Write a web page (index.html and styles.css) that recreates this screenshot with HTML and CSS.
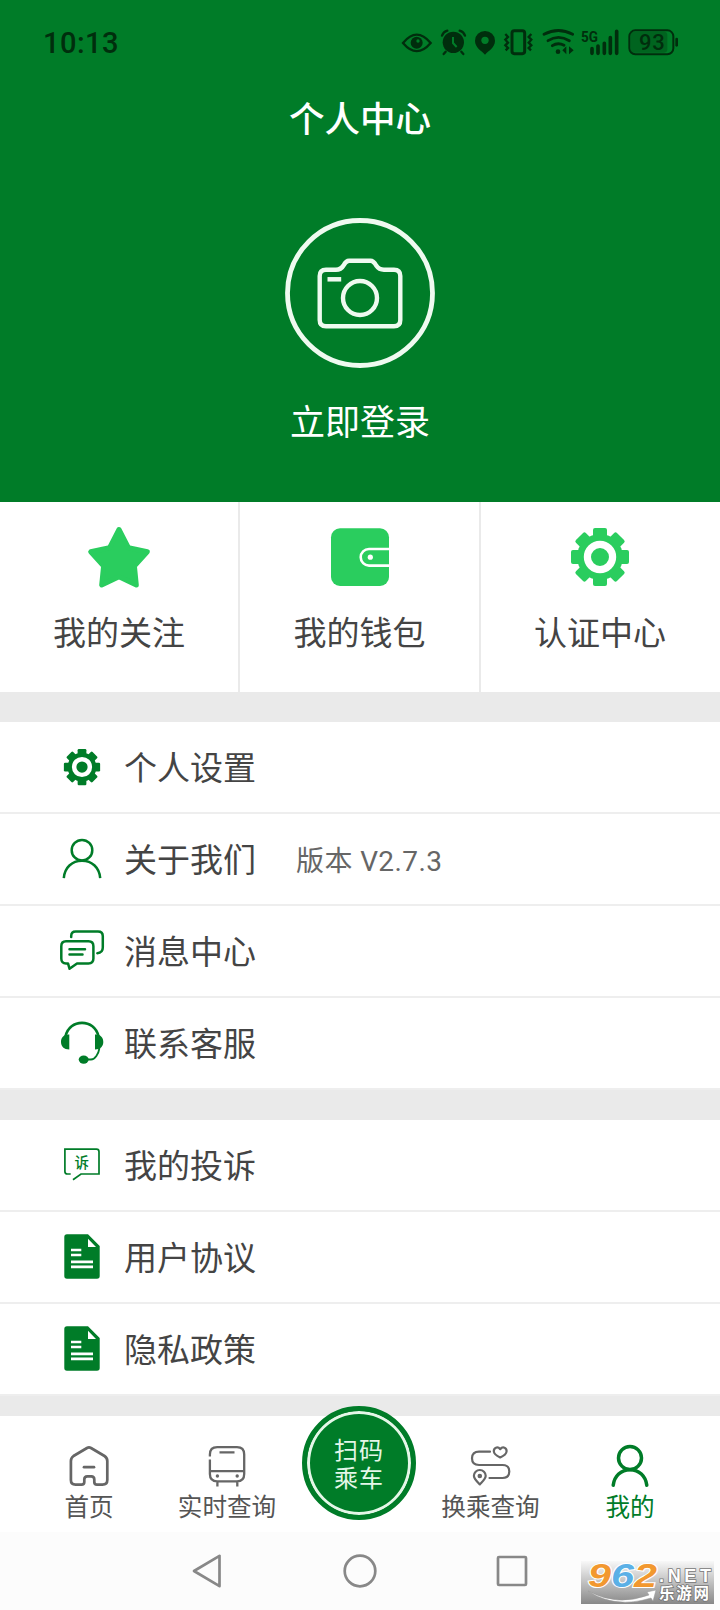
FILE: index.html
```html
<!DOCTYPE html>
<html lang="zh-CN">
<head>
    <meta charset="UTF-8">
    <meta name="viewport" content="width=device-width, initial-scale=1.0">
    <title>个人中心</title>
    <link rel="stylesheet" href="styles.css">
</head>
<body>
    <!-- shared icons -->
    <svg class="sprite" width="0" height="0">
        <symbol id="gear" viewBox="0 0 64 64">
            <g fill="currentColor">
                <circle cx="32" cy="32" r="23"/>
                <rect x="25" y="3" width="14" height="58" rx="2"/>
                <rect x="25" y="3" width="14" height="58" rx="2" transform="rotate(45 32 32)"/>
                <rect x="25" y="3" width="14" height="58" rx="2" transform="rotate(90 32 32)"/>
                <rect x="25" y="3" width="14" height="58" rx="2" transform="rotate(135 32 32)"/>
            </g>
            <circle cx="32" cy="32" r="12.6" fill="none" stroke="#fff" stroke-width="7.2"/>
        </symbol>
        <symbol id="doc" viewBox="0 -1 44 46">
            <path fill="currentColor" d="M7 -.7H28L39.700 11V41q0 2.700-2.700 2.700H7q-2.700 0-2.700-2.700V2q0-2.700 2.700-2.700z"/>
            <path fill="#fff" d="M28 3.700V12h8zM11 13.700h10.300V16.200H11zM11 18.700h10.300V21.200H11zM11 25.400h22V28.200H11zM11 30.400h22V33.200H11z"/>
        </symbol>
    </svg>

    <header class="header">
        <div class="status-bar">
            <span class="time">10:13</span>
            <div class="status-icons">
                <svg width="39" height="26" viewBox="36 41 117 78">
                    <path d="M39 83Q80 33 122 83Q80 132 39 83z" fill="none" stroke="currentColor" stroke-width="7"/>
                    <circle cx="80" cy="82" r="18" fill="currentColor"/>
                    <circle cx="84" cy="77" r="5" class="cut"/>
                </svg>
                <svg width="34" height="26" viewBox="153 41 102 78">
                    <circle cx="190" cy="81" r="32" fill="currentColor"/>
                    <path d="M156 61q4-12 16-15M225 61q-4-12-16-15M167 109l-6 7M214 109l6 7" fill="none" stroke="currentColor" stroke-width="7" stroke-linecap="round"/>
                    <path d="M189 65v18l11 12" fill="none" class="cut-line" stroke-width="6"/>
                </svg>
                <svg width="29" height="26" viewBox="255 41 87 78">
                    <path d="M285 118C275 106 255 97 255 76a30 29 0 0 1 60 0C315 97 295 106 285 118z" fill="currentColor"/>
                    <circle cx="285" cy="75" r="11" class="cut"/>
                </svg>
                <svg width="39" height="26" viewBox="342 41 117 78">
                    <rect x="366" y="46" width="38" height="69" rx="7" fill="none" stroke="currentColor" stroke-width="9"/>
                    <path d="M346 56l8 9-8 8 8 9-8 8 8 8-7 7M424 56l-8 9 8 8-8 9 8 8-8 8 7 7" fill="none" stroke="currentColor" stroke-width="7"/>
                </svg>
                <svg width="38" height="26" viewBox="459 41 114 78">
                    <path d="M462 57Q505 34 548 57M474 76Q505 56 538 76M487 91Q504 80 522 90" fill="none" stroke="currentColor" stroke-width="8.500" stroke-linecap="round"/>
                    <circle cx="504" cy="109" r="7" fill="currentColor"/>
                    <path d="M529 93v24l-12-12zM537 93l14 12-14 12z" fill="currentColor"/>
                </svg>
                <svg width="47" height="26" viewBox="573 41 141 78">
                    <text x="573" y="79" class="net" textLength="51" lengthAdjust="spacingAndGlyphs">5G</text>
                    <path d="M606 114v-14M624 114v-22M643 114v-30M661 114v-47M680 114v-66" stroke="currentColor" stroke-width="11" stroke-linecap="round"/>
                </svg>
                <svg width="51" height="26" viewBox="714 41 153 78">
                    <rect x="722" y="49" width="110" height="63" rx="10" fill="currentColor" opacity=".3"/>
                    <rect x="718" y="45" width="132" height="72" rx="18" fill="none" stroke="currentColor" stroke-width="6"/>
                    <path d="M860 71v19" stroke="currentColor" stroke-width="8" stroke-linecap="round"/>
                    <text x="747" y="104" class="level" textLength="77">93</text>
                </svg>
            </div>
        </div>
        <h1>个人中心</h1>
        <svg class="avatar" width="150" height="150" viewBox="0 0 150 150" fill="none" stroke="#effaf0">
            <circle cx="75" cy="75" r="72.500" stroke-width="4.800"/>
            <path stroke-width="4.400" d="M41 51.700H51Q56 51.700 58.500 47.500Q61 42.700 64 42.700H85.500Q88.500 42.700 91.200 47.500Q94 51.700 99 51.700H109Q115.300 51.700 115.300 58V102Q115.300 108.300 109 108.300H41Q34.700 108.300 34.700 102V58Q34.700 51.700 41 51.700z"/>
            <circle cx="75" cy="80" r="17" stroke-width="4.400"/>
            <path stroke-width="4.500" d="M42.500 61.300h13.700"/>
        </svg>
        <a class="login">立即登录</a>
    </header>

    <section class="cards">
        <div class="card">
            <svg width="64" height="64" viewBox="0 0 64 64">
                <path fill="currentColor" stroke="currentColor" stroke-width="5" stroke-linejoin="round" d="M32 4.500L41.500 22.800L60.300 26.800L47.400 41L49.300 60L32 51.800L14.700 60L16.600 41L3.700 26.800L22.500 22.800z"/>
            </svg>
            <span>我的关注</span>
        </div>
        <div class="card">
            <svg width="64" height="64" viewBox="0 0 64 64">
                <rect x="3" y="3.300" width="58" height="57.700" rx="9" fill="currentColor"/>
                <path d="M61 24H41a8.300 8.300 0 0 0 0 16.600H61" fill="none" stroke="#fff" stroke-width="2.600"/>
                <circle cx="42.300" cy="32.200" r="2.600" fill="#fff"/>
            </svg>
            <span>我的钱包</span>
        </div>
        <div class="card">
            <svg width="64" height="64"><use href="#gear"/></svg>
            <span>认证中心</span>
        </div>
    </section>

    <ul class="menu">
        <li>
            <svg class="icon gear-small" width="40" height="40"><use href="#gear"/></svg>
            <span>个人设置</span>
        </li>
        <li>
            <svg class="icon" width="44" height="44" viewBox="0 -.7 44 44" fill="none" stroke="currentColor" stroke-width="2.500">
                <circle cx="22" cy="12.500" r="10.300"/>
                <path d="M3.800 40.500C4.500 30 12 23 22 23S39.500 30 40.200 40.500"/>
            </svg>
            <span>关于我们</span>
            <em>版本 V2.7.3</em>
        </li>
        <li>
            <svg class="icon" width="44" height="44" viewBox="0 0 44 44" fill="none" stroke="currentColor" stroke-width="2.500" stroke-linecap="round" stroke-linejoin="round">
                <path d="M6 12.300H28.500Q33.400 12.300 33.400 17.200V29.500Q33.400 34.400 28.500 34.400H17L9.500 39.700L8 34.400H6Q1.300 34.400 1.300 29.500V17.200Q1.300 12.300 6 12.300z"/>
                <path d="M11.200 8V7Q11.200 2.500 15.700 2.500H38Q42.800 2.500 42.800 7.200V18.500Q42.800 23.800 37.300 24.200M9.500 20.300h15.500M9.500 25.500h13"/>
            </svg>
            <span>消息中心</span>
        </li>
        <li>
            <svg class="icon" width="44" height="44" viewBox="0 0 44 44">
                <path fill="none" stroke="currentColor" stroke-width="2.700" d="M5.500 15.500C9 -2.800 35 -2.800 38.500 15.500"/>
                <path fill="none" stroke="currentColor" stroke-width="1.800" d="M39.500 27C38.500 33 35 38.500 31 38.500H26"/>
                <path fill="currentColor" d="M9.300 13.500V28.500C4 28.500 1 25.500 1 21S4 13 9.300 13.500zM35 13.500V28.500C40.300 28.500 43.300 25.500 43.300 21S40.300 13 35 13.500z"/>
                <ellipse cx="23.700" cy="38.600" rx="5" ry="4.200" fill="currentColor"/>
            </svg>
            <span>联系客服</span>
        </li>
    </ul>

    <ul class="menu">
        <li>
            <svg class="icon" width="44" height="44" viewBox="0 0 44 44">
                <path fill="none" stroke="currentColor" stroke-width="1.700" d="M10.700 31H7.500Q4.900 31 4.900 28.400V6.200H36.500Q39 6.200 39 8.700V31H21L13 36.800"/>
                <text x="14.500" y="24.700" class="su">诉</text>
            </svg>
            <span>我的投诉</span>
        </li>
        <li>
            <svg class="icon" width="44" height="46"><use href="#doc"/></svg>
            <span>用户协议</span>
        </li>
        <li>
            <svg class="icon" width="44" height="46"><use href="#doc"/></svg>
            <span>隐私政策</span>
        </li>
    </ul>

    <nav class="tabs">
        <a class="tab">
            <svg width="44" height="44" viewBox="0 0 44 44" fill="none" stroke="currentColor" stroke-width="2.700" stroke-linecap="round" stroke-linejoin="round">
                <path d="M20 4Q22 2.900 24 4L37.500 12Q40.300 13.800 40.300 17V36Q40.300 40.600 35.500 40.600H30Q27.300 40.600 27.300 38V35.500Q27.300 32.300 24.300 32.300H20.300Q17.300 32.300 17.300 35.500V38Q17.300 40.600 14.500 40.600H8.500Q3.900 40.600 3.900 36V17Q3.900 13.800 6.500 12z"/>
                <path d="M17 23.200h10"/>
            </svg>
            <span>首页</span>
        </a>
        <a class="tab">
            <svg width="44" height="44" viewBox="0 0 44 44" fill="none" stroke="currentColor" stroke-width="2.300">
                <path d="M4.900 12.500V10.500Q4.900 3.200 12.200 3.200H32Q39.200 3.200 39.200 10.500V30Q39.200 37.300 32 37.300H12.200Q4.900 37.300 4.900 30V15.500M5 27.200H39M14.500 8.400H29.500M12.400 38v4.500M32.300 38v4.500"/>
                <circle cx="12.400" cy="32" r="1.700" fill="currentColor" stroke="none"/>
                <circle cx="32.200" cy="32" r="1.700" fill="currentColor" stroke="none"/>
            </svg>
            <span>实时查询</span>
        </a>
        <a class="scan">
            <span>扫码</span>
            <span>乘车</span>
        </a>
        <a class="tab">
            <svg width="44" height="44" viewBox="0 0 44 44" fill="none" stroke="currentColor" stroke-width="2.200" stroke-linecap="round" stroke-linejoin="round">
                <path d="M22 7.700H11Q4 7.700 4 14.300T11 21H34.500Q41.300 21 41.300 27.500T34.500 34H21.500"/>
                <path d="M32.200 5.200C29.500 1.800 25.700 4 25.800 7.300C26 10.300 29.500 12.300 32.200 13.500C35 12.300 38.400 10.300 38.600 7.300C38.700 4 35 1.800 32.200 5.200z"/>
                <path d="M11.800 40.400C9.500 38 5.900 35 5.900 31.800A5.900 5.800 0 0 1 17.700 31.800C17.700 35 14 38 11.800 40.400z"/>
                <circle cx="11.800" cy="32" r="1.200" fill="currentColor"/>
            </svg>
            <span>换乘查询</span>
        </a>
        <a class="tab active">
            <svg width="44" height="44" viewBox="0 0 44 44" fill="none" stroke="currentColor" stroke-width="3.500" stroke-linecap="round">
                <circle cx="22" cy="14" r="11.500"/>
                <path d="M5.200 41.300C6.300 32 13 25.800 22 25.800S37.700 32 38.800 41.300"/>
            </svg>
            <span>我的</span>
        </a>
    </nav>

    <footer class="sys-nav">
        <svg width="34" height="36" viewBox="0 0 34 36"><path d="M4 18L29.500 2.800V33.200z"/></svg>
        <svg width="34" height="36" viewBox="0 0 34 36"><circle cx="17" cy="18" r="15.300"/></svg>
        <svg width="34" height="36" viewBox="0 0 34 36"><rect x="3" y="4" width="28" height="28" rx="1"/></svg>
    </footer>

    <div class="watermark">
        <svg width="133" height="43" viewBox="0 0 133 43">
            <text x="7" y="25.500" class="wm-num" textLength="69" lengthAdjust="spacingAndGlyphs"><tspan fill="#f2982f">9</tspan><tspan fill="#5bb0e6">6</tspan><tspan fill="#f2982f">2</tspan></text>
            <path d="M7 30Q36 46 68 34L66 31L75 29L72 40L70 37Q34 48 7 30z" fill="#fff" stroke="#999" stroke-width=".5"/>
            <text x="78" y="20.500" class="wm-net" textLength="52" lengthAdjust="spacing">.NET</text>
            <text x="78" y="38.300" class="wm-cn" textLength="50">乐游网</text>
        </svg>
    </div>
</body>
</html>
```
FILE: styles.css
```css
* {
    box-sizing: border-box;
}

body {
    margin: 0;
    width: 720px;
    height: 1610px;
    background: #eaeaea;
    color: #444;
    font-family: Roboto, "Noto Sans CJK SC", sans-serif;
    position: relative;
    overflow: hidden;
}

svg {
    display: block;
    flex-shrink: 0;
    overflow: visible;
}

.sprite {
    position: absolute;
}

/* header */
.header {
    height: 502px;
    background: #007c28;
    color: #fff;
    display: flex;
    flex-direction: column;
    align-items: center;
}

.status-bar {
    width: 100%;
    height: 84px;
    padding: 0 41px 0 43px;
    display: flex;
    justify-content: space-between;
    align-items: center;
    color: #002e0d;
}

.time {
    padding-top: 1px;
    font-size: 29px;
    font-weight: 500;
    letter-spacing: .5px;
}

.status-icons {
    display: flex;
}

.cut {
    fill: #007c28;
}

.cut-line {
    stroke: #007c28;
}

.net {
    font-size: 46px;
    font-weight: 700;
    fill: currentColor;
}

.level {
    font-size: 66px;
    font-weight: 500;
    fill: currentColor;
}

h1 {
    margin: 10px 0 0;
    font-size: 35.5px;
    font-weight: 500;
    line-height: 52px;
}

.avatar {
    margin-top: 72px;
}

.login {
    margin-top: 30px;
    font-size: 35px;
    line-height: 52px;
}

/* three shortcuts */
.cards {
    display: grid;
    grid-template-columns: 240px 241px 239px;
    height: 190px;
    background: #fff;
}

.card {
    padding-top: 23px;
    display: flex;
    flex-direction: column;
    align-items: center;
    border-right: 2px solid #eaeaea;
    color: #2acd5e;
}

.card:last-child {
    padding-right: 1px;
    border-right: none;
}

.card span {
    margin-top: 21px;
    font-size: 33px;
    line-height: 48px;
    color: #444;
}

/* menu lists */
.menu {
    list-style: none;
    margin: 30px 0 0;
    padding: 0;
    background: #fff;
}

.menu li {
    height: 92px;
    padding-left: 60px;
    display: flex;
    align-items: center;
    border-bottom: 2px solid #eee;
    font-size: 33px;
}

.menu span {
    padding-bottom: 2px;
}

.menu .icon {
    margin-right: 20px;
    color: #007c28;
}

.menu .gear-small {
    margin-left: 2px;
    margin-right: 22px;
    margin-bottom: 1px;
}

.menu em {
    margin-left: 40px;
    padding-bottom: 1px;
    font-size: 28px;
    font-style: normal;
    letter-spacing: .4px;
    color: #666;
}

.su {
    font-size: 14.5px;
    font-weight: 500;
    fill: currentColor;
}

/* bottom tabs */
.tabs {
    height: 116px;
    margin-top: 20px;
    padding-left: 10px;
    display: grid;
    grid-template-columns: 158px 118px 146px 117px 162px;
    justify-items: center;
    background: #fff;
    color: #666;
}

.tab {
    padding-top: 28px;
    display: flex;
    flex-direction: column;
    align-items: center;
    font-size: 24.6px;
    white-space: nowrap;
}

.tab span {
    margin-top: 2px;
    line-height: 36px;
    color: #555;
}

.tab.active,
.tab.active span {
    color: #007c28;
}

.scan {
    width: 114px;
    height: 114px;
    margin-top: -10px;
    padding-top: 5px;
    border: 5px solid #007c28;
    border-radius: 50%;
    background: #007c28;
    box-shadow: inset 0 0 0 3px #e4f7e8;
    color: #e4f7e8;
    display: flex;
    flex-direction: column;
    align-items: center;
    justify-content: center;
    font-size: 24px;
    line-height: 27.5px;
    letter-spacing: 1px;
}

/* system buttons */
.sys-nav {
    height: 78px;
    padding-right: 1px;
    display: flex;
    justify-content: center;
    align-items: center;
    gap: 118.5px;
    background: #fcfcfc;
}

.sys-nav svg {
    fill: none;
    stroke: #888;
    stroke-width: 2.7px;
    stroke-linejoin: round;
}

.watermark {
    position: absolute;
    right: 6px;
    bottom: 6px;
    width: 133px;
    height: 43px;
    background: linear-gradient(#f8f8f8, #888);
}

.wm-num {
    font: italic 700 33px "Liberation Sans", sans-serif;
    stroke: #fff;
    stroke-width: 2px;
    paint-order: stroke;
}

.wm-net {
    font: 700 18px "Liberation Sans", sans-serif;
    fill: #fff;
    stroke: #777;
    stroke-width: 1.6px;
    paint-order: stroke;
}

.wm-cn {
    font: 700 15.5px "Noto Sans CJK SC", sans-serif;
    fill: #fff;
    stroke: #777;
    stroke-width: 1.6px;
    paint-order: stroke;
}
```
